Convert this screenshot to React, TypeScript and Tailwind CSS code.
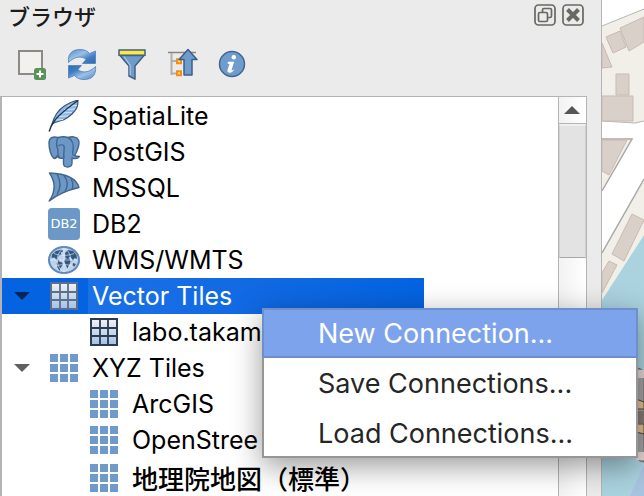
import type { ReactNode } from 'react';

const NewLayerIcon = () => (
  <svg viewBox="0 0 32 32" className="size-8">
    <rect x="3" y="3" width="23" height="23" fill="#f3f1ee" stroke="#8a8b86" strokeWidth="2" />
    <rect x="18" y="20" width="12" height="12" rx="2.5" fill="#5a9157" />
    <path d="M24 22.5v7M20.5 26h7" stroke="#fff" strokeWidth="2" />
  </svg>
);

const RefreshIcon = () => (
  <svg viewBox="0 0 32 32" className="size-8">
    <defs>
      <linearGradient id="refresh" x1="0" y1="0" x2="1" y2="1">
        <stop offset="0" stopColor="#4d86c8" />
        <stop offset="0.4" stopColor="#9cc0e6" />
        <stop offset="0.7" stopColor="#3f7cc2" />
        <stop offset="1" stopColor="#2f6cb5" />
      </linearGradient>
    </defs>
    <path id="refresh-arrow" d="M2.500 14.500C1.500 6 6 1.500 14 1.500c4.500 0 7.500 1.500 9.500 4L29.500 3V15.500H16.500L20 11.500C16 7.500 8 8.500 2.500 14.500Z" fill="url(#refresh)" stroke="#4a80be" strokeWidth="0.800" />
    <use href="#refresh-arrow" transform="rotate(180 16 16.500)" />
  </svg>
);

const FilterIcon = () => (
  <svg viewBox="0 0 32 32" className="size-8">
    <path d="M4 7.500h24L19 18v13.200l-6-3.200V18Z" fill="#6f9ccc" stroke="#41607f" strokeWidth="1.500" strokeLinejoin="round" />
    <path d="M8 8.500 14.200 17.500v9.800" stroke="#a9c5e3" strokeWidth="1.200" fill="none" />
    <rect x="3" y="2" width="26" height="5.200" fill="#fbe84a" stroke="#41607f" strokeWidth="1.500" />
  </svg>
);

const CollapseIcon = () => (
  <svg viewBox="0 0 32 32" className="size-8">
    <path d="M2 4.500h28" stroke="#858681" strokeWidth="1.500" />
    <path d="M5.500 5v22M5 13h7M5 25.500h7" stroke="#b0b0ad" strokeWidth="2" fill="none" />
    <path d="M11 11.200h4v4h-4zM11 23.200h4v4h-4z" fill="#fbe84a" stroke="#f58d1e" strokeWidth="2" />
    <path d="M22 1.500 31 11.500h-5v15.500h-8V11.500h-5Z" fill="#6f9ccc" stroke="#3b5f8a" strokeWidth="1.500" strokeLinejoin="round" />
  </svg>
);

const InfoIcon = () => (
  <svg viewBox="0 0 32 32" className="size-8">
    <circle cx="16" cy="16" r="12.500" fill="#6f9ccc" stroke="#44658d" strokeWidth="1.500" />
    <circle cx="17.800" cy="9.200" r="2.200" fill="#fff" />
    <path d="M12 13.800h6.200l-2.700 8.500c.8.300 1.800-.3 3-1.500-1.200 2.800-3 4.200-5.200 4-1.800-.2-2.200-1.400-1.600-3.200l1.800-5.600-2-.4Z" fill="#fff" />
  </svg>
);

const FeatherIcon = () => (
  <svg viewBox="0 0 32 32" className="size-8">
    <path d="M4 24C6 17 10 10 17 5.500c4-2.500 8-4.500 13-5.300 0 4.500-.5 7.500-3 10.500-3 4-7 7-11 9-4 1.500-8.500 2-12 4.300Z" fill="#8fb8e6" stroke="#3c5a7c" strokeWidth="1.200" />
    <path d="M10 16.500l10-.5M12.500 13l11.500-.5M16 9.500l11-.5M20 6l9-.5M8 20l7-.5" stroke="#d5e5f7" strokeWidth="1.200" />
    <path d="M30 .5C21 7 11 14 6 21.500 3.500 25 2 28 1.200 31.500" stroke="#26384f" strokeWidth="1.500" fill="none" />
  </svg>
);

const ElephantIcon = () => (
  <svg viewBox="0 0 32 32" className="size-8">
    <g fill="#6c98c8" stroke="#42658e" strokeWidth="1.400" strokeLinejoin="round">
      <path d="M10 1.500C5 0 1 1.500 1 7c0 6 2 13 4.500 15 2 1.500 3-.5 4-1.500 1 1.500 3.500 2 6 1.500V28c.5 4 8 4 8.500-.5V22c3 1 6 .5 7.500-1.500-2 0-3.500 0-5-.8C29.500 15 32 8 30.500 4 28.500 0 23 .5 20 1.500c-3-1-6-1-10 0Z" />
      <path d="M10 1.500c-2 4-1.500 9 0 12.500 0 3-1 5 1.500 7M20 1.500c4 2 6 7 5 12.500-.5 3-.5 5 .5 5.500M10.500 10c1.500-1.500 4-1.500 5.500 0 1 3-1 6 0 12M6 22.500c2-.5 2-1.500 3.500-3" fill="none" />
    </g>
  </svg>
);

const SailIcon = () => (
  <svg viewBox="0 0 32 32" className="size-8">
    <g stroke="#42658e" strokeWidth="1.400" strokeLinejoin="round">
      <path d="M1.500 1C15 1.500 28 5 31 15.500 20 18 10 22 1.200 29 8 19 7 9 1.500 1Z" fill="#6c98c8" />
      <path d="M9 2c4 7 4 14 0 20.500M16 3.500c4 5 4 11 1 16M23 7c2.500 4 2.500 7 1 10.500" fill="none" />
    </g>
  </svg>
);

const Db2Icon = () => (
  <span className="flex size-8 items-center justify-center rounded-sm bg-[#6c98c8] font-['DejaVu_Sans'] text-[13px] leading-4 text-white">
    DB2
  </span>
);

const GlobeIcon = () => (
  <svg viewBox="0 0 32 32" className="size-8">
    <ellipse cx="16" cy="16" rx="15" ry="13" fill="#bdd3ed" stroke="#5c88bb" strokeWidth="2" />
    <path d="M4 10.500 8 7l6-1.500 1 2-2.500 1 1 2-3 1.500-1 3 2 1.500-2 .5-3-3.500-3 .5ZM10 17l4 1.500 1 2-2.500 3.500-1 3-2-3.500-.8-4ZM17 9l3-3 5 1 3.500 4 .5 4-2.500-1-1.500 3-2-3.500-2-.5-.5 2-3-1ZM17 15l4-.5 2.500 3-2.500 4-1.500 3-2-4-1.500-3.500ZM25 19l3 1-2 3-1.500-1Z" fill="#36587f" />
    <path d="M16 4v24M3 16h26M6 9.500c6 2.500 14 2.500 20 0M6 22.500c6-2.500 14-2.500 20 0M16 4C7 9 7 23 16 28M16 4c9 5 9 19 0 24" stroke="#e7f0fa" strokeWidth="0.800" fill="none" opacity="0.800" />
  </svg>
);

const VectorGridIcon = ({ line }: { line: string }) => (
  <svg viewBox="0 0 28 28" className="mx-0.5 size-7">
    <defs>
      <linearGradient id="cells" x1="0" y1="0" x2="0" y2="1">
        <stop offset="0" stopColor="#f2f2f2" />
        <stop offset="1" stopColor="#a3c0e6" />
      </linearGradient>
    </defs>
    <rect x="1" y="1" width="26" height="26" fill="url(#cells)" stroke={line} strokeWidth="2" />
    <path d="M10 1v26M18 1v26M1 10h26M1 18h26" stroke={line} strokeWidth="1.800" />
  </svg>
);

const XyzIcon = () => (
  <svg viewBox="0 0 28 28" className="mx-0.5 size-7" fill="#6f9aca">
    {[0, 10, 20].map((y) => [0, 10, 20].map((x) => <rect key={`${x}-${y}`} x={x} y={y} width="8" height="8" />))}
  </svg>
);

const Arrow = ({ color }: { color: string }) => (
  <svg viewBox="0 0 16 8" className="h-2 w-4">
    <path d="M0 0h16L8 8Z" fill={color} />
  </svg>
);

const TOOLS = [
  { label: 'レイヤを追加', icon: <NewLayerIcon /> },
  { label: '再読み込み', icon: <RefreshIcon /> },
  { label: 'フィルタ', icon: <FilterIcon /> },
  { label: 'すべて折りたたむ', icon: <CollapseIcon /> },
  { label: 'プロパティ', icon: <InfoIcon /> },
];

type Item = { name: string; icon: ReactNode; child?: boolean; open?: boolean; selected?: boolean };

const ITEMS: Item[] = [
  { name: 'SpatiaLite', icon: <FeatherIcon /> },
  { name: 'PostGIS', icon: <ElephantIcon /> },
  { name: 'MSSQL', icon: <SailIcon /> },
  { name: 'DB2', icon: <Db2Icon /> },
  { name: 'WMS/WMTS', icon: <GlobeIcon /> },
  { name: 'Vector Tiles', icon: <VectorGridIcon line="#5b6f8c" />, open: true, selected: true },
  { name: 'labo.takam', icon: <VectorGridIcon line="#2a3c52" />, child: true },
  { name: 'XYZ Tiles', icon: <XyzIcon />, open: true },
  { name: 'ArcGIS', icon: <XyzIcon />, child: true },
  { name: 'OpenStree', icon: <XyzIcon />, child: true },
];

const MENU = [
  { label: 'New Connection...', active: true },
  { label: 'Save Connections...' },
  { label: 'Load Connections...' },
];

function TreeRow({ item }: { item: Item }) {
  return (
    <li
      role="treeitem"
      aria-selected={!!item.selected}
      className={`flex h-9 w-[422px] items-center ${item.selected ? 'bg-[#0463e1] text-white' : 'text-black'}`}
    >
      <span className={`flex shrink-0 pl-3 ${item.child ? 'w-[86px]' : 'w-[46px]'}`}>
        {item.open && <Arrow color={item.selected ? '#06265a' : '#606060'} />}
      </span>
      {item.icon}
      <span
        className={`ml-2 flex h-full flex-1 items-center pl-1 ${item.selected ? 'bg-linear-to-r from-[#1a70e6] to-[#0463e1]' : ''}`}
      >
        {item.name}
      </span>
    </li>
  );
}

function MapCanvas() {
  return (
    <svg viewBox="0 0 42 496" preserveAspectRatio="xMinYMin slice" className="h-full min-w-0 flex-1 bg-white">
      <path d="M0 26 42 9v112l-9 2-33-2Z" fill="#f2efe9" />
      <path d="M0 26 42 9M0 121l33 2 9-2" stroke="#b5b5b5" fill="none" />
      <path d="M0 139h30L0 191Z" fill="#f2efe9" />
      <path d="M0 139h30L0 191" stroke="#a8a8a8" strokeWidth="1.500" fill="none" />
      <path d="M42 179 0 253v47l42-65Z" fill="#f2efe9" />
      <path d="M42 179 0 253" stroke="#a8a8a8" strokeWidth="1.500" />
      <path d="M42 235 0 300v196h42Z" fill="#aad3df" />
      <g fill="#d9d0c9" stroke="#c9bab0">
        <path d="m18 28 24-11v25l-15 9Z" />
        <path d="m4 37 14-6 6 16-13 6ZM0 43l10 24-10 1ZM14 74h13v21H14ZM0 96h31v25H0Z" />
        <path d="M0 140h25L7 175l-7-4ZM30 214l12 6-20 41-12-7ZM7 261l8 4-15 28v-20Z" />
      </g>
      <path d="M34 368c4 0 8 2 8 6v88c-4 0-8-3-8-8Z" fill="#a5a3a3" stroke="#6f6b6b" />
      <path d="M34 370h8v8h-8ZM34 452h8v8h-8Z" fill="#e5d8d4" />
      <path d="m34 399 8 3v7h-8ZM34 424h8v10l-8-2Z" fill="#e6bf8b" stroke="#4a4644" />
      <path d="M34 411h8v12h-8Z" fill="#857c72" />
      <path d="M42 465 28 496h14Z" fill="#a9c4e0" />
    </svg>
  );
}

export default function App() {
  return (
    <div className="relative flex h-screen overflow-hidden bg-[#ebebeb] font-['Inter','Noto_Sans_CJK_JP',sans-serif]">
      <aside className="flex w-[602px] shrink-0 flex-col border-r border-[#b4b4b4] pr-3.5">
        <header className="flex h-[30px] items-center justify-between pl-2">
          <h1 className="font-['Noto_Sans_CJK_JP',sans-serif] text-[22px] leading-7 font-medium text-[#1c1c1c]">ブラウザ</h1>
          <div className="flex gap-1.5 pr-[3px]">
            <button aria-label="フロート" className="size-[22px]">
              <svg viewBox="0 0 22 22" fill="none" stroke="#696862" strokeWidth="1.700">
                <rect x="1" y="1" width="20" height="20" rx="3.500" />
                <rect x="8.500" y="4.500" width="9" height="9" rx="1.500" />
                <rect x="4.500" y="8.500" width="9" height="9" rx="1.500" fill="#ebebeb" />
              </svg>
            </button>
            <button aria-label="閉じる" className="size-[22px]">
              <svg viewBox="0 0 22 22" fill="none" stroke="#696862" strokeWidth="1.700">
                <rect x="1" y="1" width="20" height="20" rx="3.500" />
                <path d="m5.500 5.500 11 11m0-11-11 11" strokeWidth="4" />
              </svg>
            </button>
          </div>
        </header>

        <div role="toolbar" className="flex h-[66px] items-center gap-[18px] pt-0.5 pl-4">
          {TOOLS.map((tool) => (
            <button key={tool.label} aria-label={tool.label}>
              {tool.icon}
            </button>
          ))}
        </div>

        <div className="flex min-h-0 flex-1 border-t border-r border-l-2 border-[#b4b4b4] bg-white">
          <ul role="tree" className="min-w-0 flex-1 overflow-hidden pt-px text-[25px] leading-9">
            {ITEMS.map((item) => (
              <TreeRow key={item.name} item={item} />
            ))}
            <li role="treeitem" className="flex h-10 items-center pl-[86px]">
              <XyzIcon />
              <span className="ml-3 font-['Noto_Sans_CJK_JP',sans-serif] text-[26px] font-medium whitespace-nowrap">
                地理院地図（標準）
              </span>
            </li>
          </ul>
          <div className="flex w-7 flex-col border-l border-[#b4b4b4] bg-linear-to-r from-[#f2f2f2] to-white">
            <button aria-label="上へ" className="flex h-[27px] items-center justify-center border-b border-[#b4b4b4] pr-0.5">
              <svg viewBox="0 0 16 8" className="h-2 w-4">
                <path d="M0 8h16L8 0Z" fill="#555" />
              </svg>
            </button>
            <div className="h-[134px] border-x border-t-2 border-b border-x-[#d0d0d0] border-t-[#efefef] border-b-[#a8a8a8] bg-[#e3e3e3]" />
          </div>
        </div>
      </aside>

      <MapCanvas />

      <div
        role="menu"
        className="absolute top-[308px] left-[262px] w-[376px] bg-white text-[27px] leading-[44px] text-[#262626] shadow-[0_8px_28px_rgba(0,0,0,0.4)] outline-2 -outline-offset-2 outline-[#969696]"
      >
        {MENU.map(({ label, active }) => (
          <button
            key={label}
            role="menuitem"
            className={`block h-[50px] w-full border-2 pt-0.5 pl-[54px] text-left ${active ? 'relative border-[#6d90cd] bg-[#7ca3eb] text-white' : 'border-transparent'}`}
          >
            {label}
          </button>
        ))}
      </div>
    </div>
  );
}
